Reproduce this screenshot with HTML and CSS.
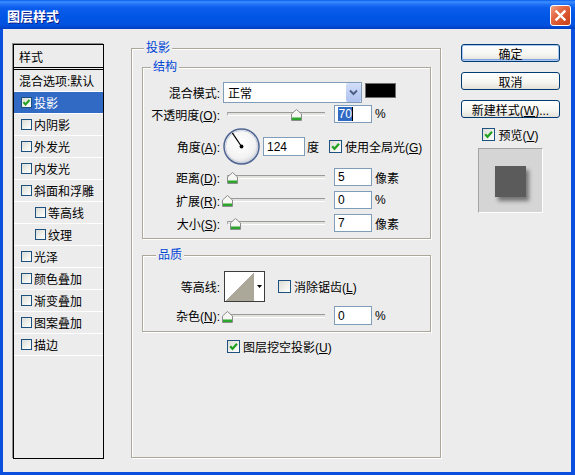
FILE: index.html
```html
<!DOCTYPE html>
<html lang="zh-CN">
<head>
<meta charset="utf-8">
<title>图层样式</title>
<link rel="stylesheet" href="styles.css">
</head>
<body>
<div class="window">
  <div class="titlebar">
    <span class="title">图层样式</span>
    <span class="close"><svg width="19" height="19" viewBox="0 0 19 19"><path d="M5.5 5.5 L13.5 13.5 M13.5 5.5 L5.5 13.5" stroke="#fff" stroke-width="2.4" stroke-linecap="square"/></svg></span>
  </div>
  <div class="body">
    <div class="stylelist">
      <div class="list-head">样式</div>
      <div class="list-row plain">混合选项:默认</div>
      <div class="list-row selected"><span class="cb sm"><svg width="9" height="9" viewBox="0 0 9 9"><path d="M1.5 4.2 L3.5 6.5 L7.5 2" stroke="#21A121" stroke-width="2" fill="none"/></svg></span>投影</div>
      <div class="list-row"><span class="cb sm"></span>内阴影</div>
      <div class="list-row"><span class="cb sm"></span>外发光</div>
      <div class="list-row"><span class="cb sm"></span>内发光</div>
      <div class="list-row"><span class="cb sm"></span>斜面和浮雕</div>
      <div class="list-row indent"><span class="cb sm"></span>等高线</div>
      <div class="list-row indent"><span class="cb sm"></span>纹理</div>
      <div class="list-row"><span class="cb sm"></span>光泽</div>
      <div class="list-row"><span class="cb sm"></span>颜色叠加</div>
      <div class="list-row"><span class="cb sm"></span>渐变叠加</div>
      <div class="list-row"><span class="cb sm"></span>图案叠加</div>
      <div class="list-row"><span class="cb sm"></span>描边</div>
    </div>

    <div class="group main">
      <span class="legend l-main">投影</span>
      <div class="group sub structure">
        <span class="legend l-struct">结构</span>
        <div class="row r-mix">
          <span class="label">混合模式:</span>
          <div class="select">
            <span class="select-text">正常</span>
            <span class="select-btn"><svg width="15" height="19" viewBox="0 0 15 19"><path d="M4 7.5 L7.5 11 L11 7.5" stroke="#4D6185" stroke-width="2" fill="none"/></svg></span>
          </div>
          <span class="swatch"></span>
        </div>
        <div class="row r-opacity">
          <span class="label">不透明度(<u>O</u>):</span>
          <div class="slider"><div class="track"></div><span class="thumb" style="--v:0.70"><svg width="11" height="12" viewBox="0 0 11 12"><path d="M0.5 5 L5.5 0.5 L10.5 5 L10.5 11.5 L0.5 11.5 Z" fill="#F6F6F2" stroke="#8C8C8C"/><rect x="1" y="8.5" width="9" height="2.5" fill="#2BA52B"/></svg></span></div>
          <div class="input"><span class="sel">70</span><span class="caret"></span></div>
          <span class="unit">%</span>
        </div>
        <div class="row r-angle">
          <span class="label">角度(<u>A</u>):</span>
          <span class="dial"><svg width="37" height="37" viewBox="0 0 37 37"><defs><radialGradient id="dg" cx="45%" cy="40%" r="62%"><stop offset="0" stop-color="#FFFFFF"/><stop offset="0.7" stop-color="#F3F3F3"/><stop offset="1" stop-color="#D2D4DC"/></radialGradient></defs><circle cx="18.5" cy="18.5" r="17.5" fill="url(#dg)" stroke="#4F6592" stroke-width="1.5"/><circle cx="18.5" cy="18.5" r="16" fill="none" stroke="#C7CDDD" stroke-width="1"/><line x1="18.5" y1="18.5" x2="9.3" y2="4.8" stroke="#000" stroke-width="1.2"/><circle cx="18.5" cy="18.5" r="1.9" fill="#000"/></svg></span>
          <div class="input wide">124</div>
          <span class="unit deg">度</span>
          <span class="check global"><span class="cb"><svg width="11" height="11" viewBox="0 0 11 11"><path d="M2.2 5.2 L4.5 7.8 L9 2.8" stroke="#21A121" stroke-width="2.2" fill="none"/></svg></span><span class="check-text">使用全局光(<u>G</u>)</span></span>
        </div>
        <div class="row r-dist">
          <span class="label">距离(<u>D</u>):</span>
          <div class="slider"><div class="track"></div><span class="thumb" style="--v:0.056"><svg width="11" height="12" viewBox="0 0 11 12"><path d="M0.5 5 L5.5 0.5 L10.5 5 L10.5 11.5 L0.5 11.5 Z" fill="#F6F6F2" stroke="#8C8C8C"/><rect x="1" y="8.5" width="9" height="2.5" fill="#2BA52B"/></svg></span></div>
          <div class="input">5</div>
          <span class="unit">像素</span>
        </div>
        <div class="row r-spread">
          <span class="label">扩展(<u>R</u>):</span>
          <div class="slider"><div class="track"></div><span class="thumb" style="--v:0"><svg width="11" height="12" viewBox="0 0 11 12"><path d="M0.5 5 L5.5 0.5 L10.5 5 L10.5 11.5 L0.5 11.5 Z" fill="#F6F6F2" stroke="#8C8C8C"/><rect x="1" y="8.5" width="9" height="2.5" fill="#2BA52B"/></svg></span></div>
          <div class="input">0</div>
          <span class="unit">%</span>
        </div>
        <div class="row r-size">
          <span class="label">大小(<u>S</u>):</span>
          <div class="slider"><div class="track"></div><span class="thumb" style="--v:0.077"><svg width="11" height="12" viewBox="0 0 11 12"><path d="M0.5 5 L5.5 0.5 L10.5 5 L10.5 11.5 L0.5 11.5 Z" fill="#F6F6F2" stroke="#8C8C8C"/><rect x="1" y="8.5" width="9" height="2.5" fill="#2BA52B"/></svg></span></div>
          <div class="input">7</div>
          <span class="unit">像素</span>
        </div>
      </div>

      <div class="group sub quality">
        <span class="legend l-qual">品质</span>
        <div class="row r-contour">
          <span class="label">等高线:</span>
          <div class="contour">
            <svg class="contour-curve" width="29" height="29" viewBox="0 0 29 29" shape-rendering="crispEdges"><polygon points="0,29 29,0 29,29" fill="#ACA899"/></svg>
            <span class="contour-btn"><svg width="5" height="3" viewBox="0 0 5 3"><polygon points="0,0 5,0 2.5,3" fill="#000"/></svg></span>
          </div>
          <span class="check antialias"><span class="cb"></span><span class="check-text">消除锯齿(<u>L</u>)</span></span>
        </div>
        <div class="row r-noise">
          <span class="label">杂色(<u>N</u>):</span>
          <div class="slider"><div class="track"></div><span class="thumb" style="--v:0"><svg width="11" height="12" viewBox="0 0 11 12"><path d="M0.5 5 L5.5 0.5 L10.5 5 L10.5 11.5 L0.5 11.5 Z" fill="#F6F6F2" stroke="#8C8C8C"/><rect x="1" y="8.5" width="9" height="2.5" fill="#2BA52B"/></svg></span></div>
          <div class="input tall">0</div>
          <span class="unit">%</span>
        </div>
      </div>

      <div class="knockout">
        <span class="check"><span class="cb"><svg width="11" height="11" viewBox="0 0 11 11"><path d="M2.2 5.2 L4.5 7.8 L9 2.8" stroke="#21A121" stroke-width="2.2" fill="none"/></svg></span><span class="check-text">图层挖空投影(<u>U</u>)</span></span>
      </div>
    </div>

    <div class="side">
      <div class="btn default">确定</div>
      <div class="btn">取消</div>
      <div class="btn"><span>新建样式(<u>W</u>)...</span></div>
      <span class="check preview-check"><span class="cb"><svg width="11" height="11" viewBox="0 0 11 11"><path d="M2.2 5.2 L4.5 7.8 L9 2.8" stroke="#21A121" stroke-width="2.2" fill="none"/></svg></span><span class="check-text">预览(<u>V</u>)</span></span>
      <div class="preview"><div class="preview-sq"></div></div>
    </div>
  </div>
</div>
</body>
</html>
```

FILE: styles.css
```css
* { box-sizing: border-box; }
html, body { margin: 0; padding: 0; }
body {
  width: 575px;
  height: 475px;
  overflow: hidden;
  font-family: "Liberation Sans", "Noto Sans CJK SC", sans-serif;
  font-size: 12px;
  color: #000;
  background: #0B4FDF;
  text-autospace: no-autospace;
}
u { text-decoration-skip-ink: none; }
.window {
  width: 575px;
  height: 475px;
  display: flex;
  flex-direction: column;
}
.titlebar {
  height: 29px;
  flex: none;
  display: flex;
  align-items: center;
  justify-content: space-between;
  padding: 0 4px 0 7px;
  background: linear-gradient(to bottom, #0A5EEE 0, #3D8FFD 2px, #2474F8 4px, #0A5CEC 8px, #0055E5 18px, #0452DF 25px, #003FC2 29px);
}
.title {
  color: #fff;
  font-family: "Noto Sans CJK SC", sans-serif;
  font-weight: bold;
  font-size: 13px;
  line-height: 15px;
  text-shadow: 1px 1px 0 #0C1E8C;
  margin-top: 1px;
}
.close {
  width: 21px;
  height: 21px;
  margin-top: 2px;
  border: 1px solid #fff;
  border-radius: 3px;
  background: linear-gradient(135deg, #F2A587 0%, #E46B45 35%, #D65027 70%, #C4401D 100%);
  display: flex;
  align-items: center;
  justify-content: center;
}
.body {
  flex: 1;
  display: flex;
  align-items: flex-start;
  background: #ECECEC;
  border: solid #0B4FDF;
  border-width: 0 4px 3px 3px;
}

/* style list */
.stylelist {
  flex: none;
  margin: 15px 0 0 10px;
  width: 91px;
  height: 415px;
  border: 1px solid #000;
  box-shadow: -1px -1px 0 #8D8D8D;
  background: #ECECEC;
}
.list-head {
  height: 25px;
  border-bottom: 3px double #000;
  padding-left: 5px;
  display: flex;
  align-items: center;
}
.list-row {
  height: 22px;
  border-bottom: 1px solid #fff;
  display: flex;
  align-items: center;
  padding-left: 7px;
  white-space: nowrap;
}
.list-row.plain { padding-left: 5px; }
.list-row.indent { padding-left: 21px; }
.list-row.selected { background: #316AC5; color: #fff; }

/* checkboxes */
.cb {
  flex: none;
  width: 13px;
  height: 13px;
  border: 1px solid #1C5180;
  background: linear-gradient(135deg, #DCDCD6 0%, #F2F2EE 60%, #FFFFFF 100%);
  display: flex;
  align-items: center;
  justify-content: center;
}
.cb.sm { width: 11px; height: 11px; margin-right: 2px; }
.check {
  display: flex;
  align-items: center;
  gap: 3px;
  white-space: nowrap;
}

/* group boxes */
.group {
  position: relative;
  flex: none;
  border: 1px solid #ACA899;
  box-shadow: inset 1px 1px 0 #fff, 1px 1px 0 #fff;
}
.legend {
  position: absolute;
  top: -8px;
  padding: 0 2px;
  height: 15px;
  line-height: 14px;
  background: #ECECEC;
  color: #0046D5;
}
.l-main { left: 12px; }
.l-struct { left: 8px; }
.l-qual { left: 13px; }
.main {
  margin: 19px 0 0 27px;
  width: 310px;
  height: 410px;
}
.sub {
  margin-left: 10px;
  width: 289px;
}
.structure { margin-top: 18px; height: 172px; }
.quality { margin-top: 16px; height: 77px; }

/* rows */
.row {
  display: flex;
  align-items: center;
}
.label {
  flex: none;
  width: 77px;
  text-align: right;
  white-space: nowrap;
}
.r-mix { margin-top: 14px; height: 21px; }
.r-opacity { margin-top: 2px; height: 18px; }
.r-angle { margin-top: 5px; height: 37px; }
.r-dist { margin-top: 3px; height: 18px; }
.r-spread { margin-top: 5px; height: 18px; }
.r-size { margin-top: 5px; height: 18px; }
.r-contour { margin-top: 15px; height: 31px; }
.r-noise { margin-top: 4px; height: 19px; }

.select {
  flex: none;
  margin-left: 3px;
  width: 139px;
  height: 21px;
  border: 1px solid #7F9DB9;
  background: #fff;
  display: flex;
  align-items: center;
}
.select-text { padding-left: 4px; }
.select-btn {
  margin-left: auto;
  width: 15px;
  height: 19px;
  border-radius: 2px;
  background: linear-gradient(to bottom, #D2DFFA, #BCCDF3 60%, #AFC2EE);
  display: flex;
}
.swatch {
  flex: none;
  align-self: flex-start;
  margin: 1px 0 0 3px;
  width: 31px;
  height: 15px;
  background: #000;
  border: 1px solid #6E6E6E;
}

.slider {
  position: relative;
  flex: none;
  margin-left: 3px;
  width: 107px;
  height: 18px;
  display: flex;
  align-items: center;
}
.track {
  margin-left: 4px;
  width: 98px;
  height: 4px;
  border-top: 1px solid #9A9A9A;
  border-left: 1px solid #B0B0B0;
  border-bottom: 1px solid #FFFFFF;
  background: #E2E2DE;
}
.thumb {
  position: absolute;
  top: 4px;
  left: calc(4px + var(--v) * 98px - 5px);
  width: 11px;
  height: 12px;
  display: flex;
}

.input {
  flex: none;
  margin-left: 4px;
  width: 38px;
  height: 18px;
  border: 1px solid #7F9DB9;
  background: #fff;
  padding-left: 3px;
  display: flex;
  align-items: center;
  font-size: 12px;
}
.input.wide { margin-left: 3px; width: 42px; height: 19px; }
.input.tall { height: 19px; }
.sel {
  background: #316AC5;
  color: #fff;
  line-height: 14px;
  padding: 0 0.5px;
}
.caret {
  width: 1px;
  height: 14px;
  background: #000;
}
.unit { flex: none; margin-left: 3px; }
.unit.deg { margin-left: 2px; }

.dial {
  flex: none;
  margin-left: 3px;
  width: 37px;
  height: 37px;
  display: flex;
}
.global { margin-left: 10px; }

.contour {
  flex: none;
  margin-left: 4px;
  width: 41px;
  height: 31px;
  border: 1px solid #3C3C3C;
  background: #fff;
  display: flex;
}
.contour-btn {
  width: 10px;
  display: flex;
  align-items: center;
  justify-content: center;
}
.antialias { margin-left: 13px; }

.knockout {
  margin: 6px 0 0 95px;
  height: 17px;
  display: flex;
  align-items: center;
}

/* right side */
.side {
  flex: none;
  margin: 15px 0 0 20px;
  width: 99px;
  display: flex;
  flex-direction: column;
  align-items: center;
}
.btn {
  width: 99px;
  height: 18px;
  border: 1px solid #003C74;
  border-radius: 3px;
  background: linear-gradient(to bottom, #FFFFFF 0%, #F5F5F1 60%, #E3E0D8 100%);
  display: flex;
  align-items: center;
  justify-content: center;
  white-space: nowrap;
}
.btn + .btn { margin-top: 10px; }
.btn.default {
  box-shadow: inset 0 0 0 1px #A9C6F2, inset 0 -1px 0 1px #7FA4E0;
}
.preview-check { margin-top: 10px; height: 13px; }
.preview {
  margin-top: 7px;
  width: 65px;
  height: 65px;
  border: 1px solid;
  border-color: #A4A4A4 #FFFFFF #FFFFFF #A4A4A4;
  background: #D5D5D5;
  display: flex;
  align-items: center;
  justify-content: center;
}
.preview-sq {
  width: 31px;
  height: 31px;
  margin-top: 2px;
  background: #5B5B5B;
  box-shadow: 3px 4px 4px rgba(0, 0, 0, 0.45);
}
```
